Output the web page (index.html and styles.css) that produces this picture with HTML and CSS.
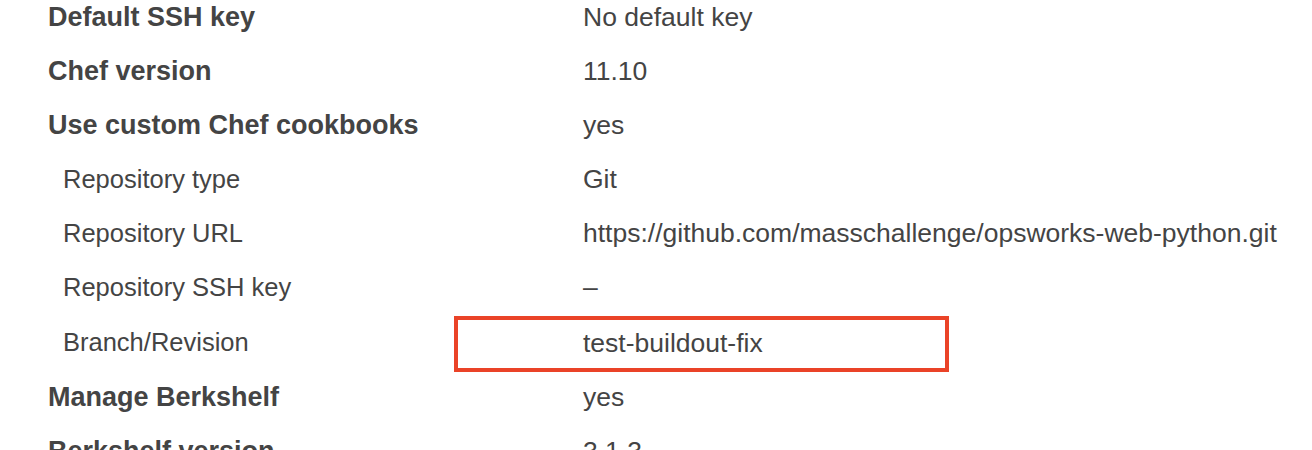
FILE: index.html
```html
<!DOCTYPE html>
<html>
<head>
<meta charset="utf-8">
<link rel="stylesheet" href="styles.css">
</head>
<body>
<div class="settings">
  <div class="row">
    <div class="label main">Default SSH key</div>
    <div class="value">No default key</div>
  </div>
  <div class="row">
    <div class="label main">Chef version</div>
    <div class="value">11.10</div>
  </div>
  <div class="row">
    <div class="label main">Use custom Chef cookbooks</div>
    <div class="value">yes</div>
  </div>
  <div class="row">
    <div class="label sub">Repository type</div>
    <div class="value">Git</div>
  </div>
  <div class="row">
    <div class="label sub">Repository URL</div>
    <div class="value">https://github.com/masschallenge/opsworks-web-python.git</div>
  </div>
  <div class="row">
    <div class="label sub">Repository SSH key</div>
    <div class="value">–</div>
  </div>
  <div class="row row-marked">
    <div class="label sub">Branch/Revision</div>
    <div class="value">test-buildout-fix</div>
    <span class="highlight"></span>
  </div>
  <div class="row">
    <div class="label main">Manage Berkshelf</div>
    <div class="value">yes</div>
  </div>
  <div class="row">
    <div class="label main">Berkshelf version</div>
    <div class="value">3.1.3</div>
  </div>
</div>
</body>
</html>
```
FILE: styles.css
```css
html, body {
  margin: 0;
  padding: 0;
  background: #ffffff;
}
body {
  font-family: "Liberation Sans", Arial, Helvetica, sans-serif;
  color: #444444;
  overflow: hidden;
}
.settings {
  margin-top: -10px;
  padding-left: 48px;
  display: flex;
  flex-direction: column;
}
.row {
  position: relative;
  display: grid;
  grid-template-columns: 535px 1fr;
  align-items: center;
  height: 54px;
}
.row-marked {
  height: 56px;
}
.label {
  white-space: nowrap;
}
.label.main {
  font-size: 27px;
  font-weight: bold;
}
.label.sub {
  font-size: 25.5px;
  padding-left: 15px;
}
.value {
  font-size: 26.5px;
  white-space: nowrap;
}
.row-marked .value {
  padding-top: 2px;
}
.highlight {
  position: absolute;
  left: 406px;
  top: 2px;
  width: 495px;
  height: 56px;
  box-sizing: border-box;
  border: 4px solid #ea4328;
}
```
